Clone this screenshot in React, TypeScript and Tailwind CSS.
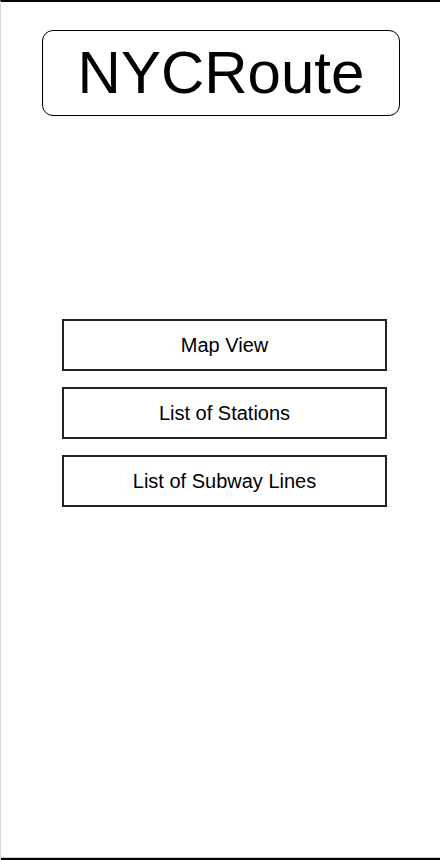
export default function App() {
    const links = ["Map View", "List of Stations", "List of Subway Lines"];

    return (
        <div
            className="w-[440px] h-[860px] bg-white flex flex-col border-t-2 border-black border-l border-l-[#d9d9d9]"
            style={{ fontFamily: '"Liberation Sans", Arial, sans-serif' }}
        >
            <div className="flex-1 flex flex-col">
                <div className="mt-[28px] ml-[41px] w-[358px] h-[86px] rounded-[11px] border-[1.5px] border-black flex items-center justify-center">
                    <h1 className="text-[60px] leading-none text-black">NYCRoute</h1>
                </div>
                <div className="mt-[203px] ml-[61px] flex flex-col gap-[16px]">
                    {links.map((label) => (
                        <button
                            key={label}
                            className="w-[325px] h-[52px] border-2 border-[#222] bg-white flex items-center justify-center text-[20px] text-black"
                        >
                            {label}
                        </button>
                    ))}
                </div>
            </div>
            <div className="border-b border-[#cfcfcf]" />
            <div className="h-[2px] bg-black" />
        </div>
    );
}
